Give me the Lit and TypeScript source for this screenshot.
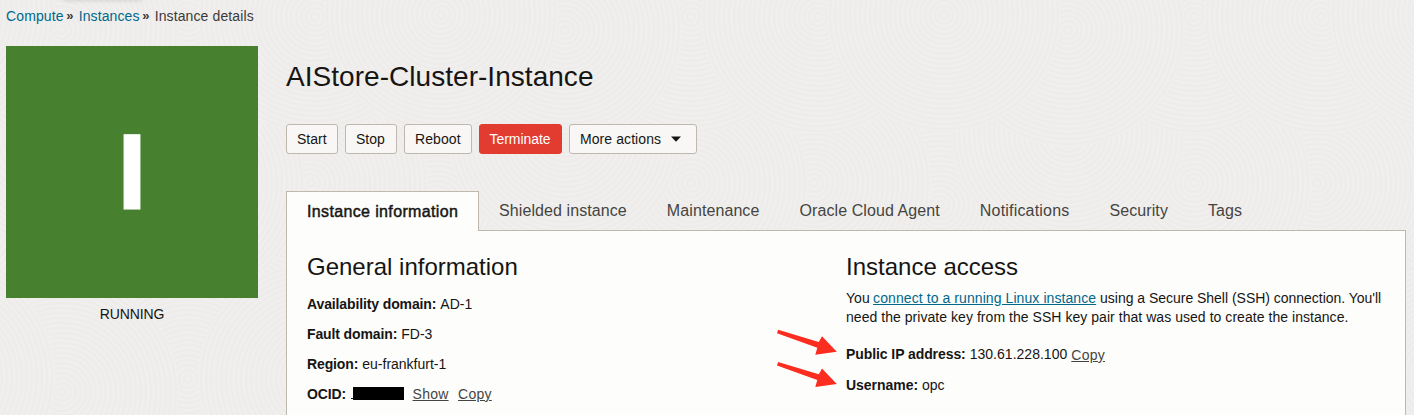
import { LitElement, html, css, unsafeCSS } from "lit";
import { customElement, state } from "lit/decorators.js";
import { classMap } from "lit/directives/class-map.js";

const TILE_W = 503;
const TILE_H = 362;

/* Overlapping discs with concentric grooves, repeated as a seamless tile. */
function groovedTile(): string {
  const discs: [number, number][] = [
    [437, 205], [311, 183], [188, 183], [62, 133],
    [188, 17], [315, 17], [62, 30], [441, 15],
  ];
  let body = "";
  for (const [x, y] of discs) {
    for (const dy of [-TILE_H, 0, TILE_H]) {
      for (const dx of [-TILE_W, 0, TILE_W]) {
        body += `<use href='#d' x='${x + dx}' y='${y + dy}'/>`;
      }
    }
  }
  let rings = "<circle r='117' fill='#f0efed' stroke='none'/>";
  for (let r = 4; r < 118; r += 5) rings += `<circle r='${r}'/>`;
  const svg =
    `<svg xmlns='http://www.w3.org/2000/svg' width='${TILE_W}' height='${TILE_H}'>` +
    `<defs><g id='d' fill='none' stroke='#edecea' stroke-width='2'>${rings}</g></defs>${body}</svg>`;
  return `url("data:image/svg+xml,${encodeURIComponent(svg)}")`;
}

const TABS = [
  "Instance information", "Shielded instance", "Maintenance",
  "Oracle Cloud Agent", "Notifications", "Security", "Tags",
];

@customElement("app-root")
export class AppRoot extends LitElement {
  @state() private tab = 0;

  static styles = css`
    :host {
      display: block;
      position: relative;
      box-sizing: border-box;
      height: 415px;
      overflow: hidden;
      background: #f0efed ${unsafeCSS(groovedTile())};
      font: 14px/20px "Liberation Sans", Arial, sans-serif;
      color: #161513;
    }
    .glow {
      position: absolute;
      left: 64px;
      top: -10px;
      width: 78px;
      height: 10px;
      box-shadow: 0 0 5px rgba(0, 0, 0, 0.16);
    }
    .crumbs {
      display: flex;
      padding: 6px 6px 20px;
      color: #3b3a38;
      letter-spacing: 0.12px;
    }
    .crumbs a { color: #00688c; }
    .sep {
      width: 7px;
      margin: 0 5.3px 0 2.7px;
      font-size: 13px;
      font-weight: bold;
      letter-spacing: 0;
    }
    .page { display: flex; gap: 28px; padding: 0 8px 0 6px; }
    .side { width: 252px; flex: none; text-align: center; }
    .tile {
      height: 252px;
      background: #47802f;
      color: #fff;
      font-size: 108px;
      line-height: 252px;
      font-weight: bold;
      -webkit-text-stroke: 1.2px #fff;
    }
    .status { margin-top: 6px; letter-spacing: -0.1px; }
    .main { flex: 1; min-width: 0; }
    h1, h2 { margin: 0; font-weight: 400; }
    h1 { padding-top: 12px; font-size: 28px; line-height: 37px; letter-spacing: 0.04px; }
    .actions { display: flex; gap: 7px; margin-top: 29px; }
    button { font: inherit; color: inherit; padding: 0; margin: 0; }
    .btn {
      box-sizing: border-box;
      height: 30px;
      padding: 0 10px;
      border: 1px solid #bfb8b0;
      border-radius: 3px;
      background: #f8f7f5;
      text-align: left;
      white-space: nowrap;
    }
    .w52 { width: 52px; }
    .w68 { width: 68px; letter-spacing: 0.1px; }
    .danger { width: 83px; padding-left: 9.5px; letter-spacing: -0.05px; background: #e23c30; border-color: #e23c30; color: #fff; }
    .more { width: 128px; display: flex; align-items: center; gap: 10px; letter-spacing: 0.08px; }
    .tabs { display: flex; height: 40px; margin-top: 37px; position: relative; }
    .tab {
      border: 0;
      background: none;
      height: 39px;
      padding: 0 20px;
      font-size: 16px;
      color: #454441;
      letter-spacing: 0.09px;
      white-space: nowrap;
    }
    .wide { letter-spacing: 0.19px; }
    .active {
      box-sizing: border-box;
      width: 193px;
      height: 40px;
      border: 1px solid #bfb8b0;
      border-bottom: 0;
      background: #fdfdfb;
      color: #161513;
      letter-spacing: 0.36px;
      -webkit-text-stroke: 0.45px #161513;
    }
    .panel {
      display: grid;
      grid-template-columns: 539px 1fr;
      height: 200px;
      margin-top: -1px;
      padding: 20px 0 0 20px;
      border: 1px solid #bfb8b0;
      background: #fdfdfb;
    }
    h2 { font-size: 24px; line-height: 31px; }
    .row { margin-top: 10px; white-space: nowrap; display: flex; }
    .first { margin-top: 12px; }
    .row b { letter-spacing: -0.12px; margin-right: 4px; }
    .row a { color: #454441; text-decoration: underline; letter-spacing: 0.25px; }
    .redact { width: 51px; height: 13px; margin-top: 3px; background: #000; }
    .dot { width: 1.5px; height: 1.5px; margin: 13.5px 0 0 1px; background: #161513; }
    .show { margin: 0 9.5px 0 9px; }
    .row .copy-ip { margin-left: 4px; padding-top: 1px; }
    .desc { margin: 7px 0 0; line-height: 19px; white-space: nowrap; letter-spacing: 0.045px; }
    .desc a { color: #00688c; text-decoration: underline; letter-spacing: 0.08px; margin-left: -0.6px; }
    .rest { letter-spacing: -0.02px; }
    .ip { margin-top: 17px; letter-spacing: 0.02px; }
    .ip b { letter-spacing: -0.08px; }
    .user { margin-top: 10px; }
    .user b { letter-spacing: -0.04px; }
    .arrows { position: absolute; left: 770px; top: 320px; }
  `;

  render() {
    return html`
      <div class="glow"></div>
      <nav class="crumbs">
        <a>Compute</a><span class="sep">»</span><a>Instances</a><span class="sep">»</span><span>Instance details</span>
      </nav>
      <div class="page">
        <aside class="side">
          <div class="tile">I</div>
          <div class="status">RUNNING</div>
        </aside>
        <main class="main">
          <h1>AIStore-Cluster-Instance</h1>
          <div class="actions">
            <button class="btn w52">Start</button>
            <button class="btn w52">Stop</button>
            <button class="btn w68">Reboot</button>
            <button class="btn danger">Terminate</button>
            <button class="btn more">
              More actions
              <svg width="10" height="6" viewBox="0 0 10 6"><path d="M0 .5h10L5 5.8z" fill="#161513"/></svg>
            </button>
          </div>
          <div class="tabs">
            ${TABS.map((name, i) => html`
              <button
                class=${classMap({ tab: true, active: i === this.tab, wide: name === "Notifications" })}
                @click=${() => (this.tab = i)}
              >${name}</button>`)}
          </div>
          <div class="panel">
            <section>
              <h2>General information</h2>
              <div class="row first"><b>Availability domain:</b>AD-1</div>
              <div class="row"><b>Fault domain:</b>FD-3</div>
              <div class="row"><b>Region:</b>eu-frankfurt-1</div>
              <div class="row"><b>OCID:</b><span class="dot"></span><span class="redact"></span><a class="show">Show</a><a>Copy</a></div>
            </section>
            <section>
              <h2>Instance access</h2>
              <p class="desc">You <a>connect to a running Linux instance</a><span class="rest"> using a Secure Shell (SSH) connection. You'll</span><br>need the private key from the SSH key pair that was used to create the instance.</p>
              <div class="row ip"><b>Public IP address:</b>130.61.228.100<a class="copy-ip">Copy</a></div>
              <div class="row user"><b>Username:</b>opc</div>
            </section>
          </div>
        </main>
      </div>
      <svg class="arrows" width="70" height="70" viewBox="0 0 70 70" fill="#fb2d20">
        <path d="M8.1 9.7L48.8 22.1 52 16.3 66.8 31.7 45.3 34.7 47.3 27.8 7 13.2z"/>
        <path d="M8.1 41.9L48.8 54.3 52 48.5 66.8 63.9 45.3 66.9 47.3 60 7 45.4z"/>
      </svg>
    `;
  }
}
